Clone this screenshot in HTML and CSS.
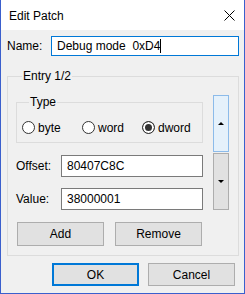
FILE: index.html
```html
<!DOCTYPE html>
<html lang="en">

<head>
    <meta charset="UTF-8">
    <meta name="viewport" content="width=device-width, initial-scale=1.0">
    <title>Edit Patch</title>

    <link rel="stylesheet" href="styles.css">
</head>

<body>
    <div class="dialog">
        <div class="titlebar">
            <span class="title">Edit Patch</span>
            <svg class="close" width="11" height="11" viewBox="0 0 11 11">
                <path d="M0.5 0.5 L10.5 10.5 M10.5 0.5 L0.5 10.5" stroke="#000" stroke-width="1" fill="none"/>
            </svg>
        </div>
        <div class="content">
            <div class="name-row">
                <label class="name-label">Name:</label>
                <div class="textbox focused">Debug mode  0xD4<span class="caret"></span></div>
            </div>

            <fieldset class="group entry">
                <legend>Entry 1/2</legend>
                <div class="entry-main">
                    <div class="entry-fields">
                        <fieldset class="group type">
                            <legend>Type</legend>
                            <div class="radios">
                                <label class="radio"><input type="radio" name="type"> byte</label>
                                <label class="radio"><input type="radio" name="type"> word</label>
                                <label class="radio"><input type="radio" name="type" checked> dword</label>
                            </div>
                        </fieldset>
                        <div class="field-row">
                            <label class="field-label">Offset:</label>
                            <div class="textbox">80407C8C</div>
                        </div>
                        <div class="field-row value">
                            <label class="field-label">Value:</label>
                            <div class="textbox">38000001</div>
                        </div>
                    </div>
                    <!-- spin buttons -->
                    <div class="spin">
                        <div class="spin-btn up">
                            <svg width="6" height="3" viewBox="0 0 6 3"><path d="M3 0 L6 3 L0 3 Z" fill="#000"/></svg>
                        </div>
                        <div class="spin-btn down">
                            <svg width="6" height="3" viewBox="0 0 6 3"><path d="M0 0 L6 0 L3 3 Z" fill="#000"/></svg>
                        </div>
                    </div>
                </div>
                <div class="entry-buttons">
                    <button class="btn">Add</button>
                    <button class="btn">Remove</button>
                </div>
            </fieldset>

            <div class="dialog-buttons">
                <button class="btn default">OK</button>
                <button class="btn">Cancel</button>
            </div>
        </div>
    </div>
</body>

</html>
```

FILE: styles.css
```css
* {
    box-sizing: border-box;
}
body {
    margin: 0;
    font-family: "Liberation Sans", Arial, sans-serif;
    font-size: 12px;
    color: #000;
}
.dialog {
    width: 245px; height: 294px;
    border: 1px solid #3a5fcd;
    border-top: 0;
    display: flex;
    flex-direction: column;
    background-color: #f0f0f0;
}
.titlebar {
    height: 30px;
    background-color: #fff;
    display: flex;
    align-items: center;
    justify-content: space-between;
    padding: 1px 9px 0 8px;
}
.close {
    display: block;
}
.content {
    flex: 1;
    padding: 6px 5px 0 6px;
}

/* name */
.name-row {
    display: flex;
    align-items: center;
}
.name-label {
    width: 44px;
}
.textbox {
    flex: 1;
    height: 22px;
    border: 1px solid #7a7a7a;
    background-color: #fff;
    padding: 0 5px;
    line-height: 20px;
    white-space: pre;
}
.name-row .textbox {
    height: 20px;
    line-height: 18px;
}
.textbox.focused {
    border-color: #0078d7;
}
.caret {
    display: inline-block;
    width: 1px; height: 14px;
    background-color: #000;
    vertical-align: -3px;
}

/* group boxes */
fieldset.group {
    margin: 0;
    padding: 0;
    min-width: 0;
    border: 1px solid #dcdcdc;
}
.group legend {
    padding: 0 1px;
    line-height: 14px;
}
fieldset.entry {
    margin-top: 13px;
    padding: 12px 9px 9px 8px;
}
.entry legend {
    margin-left: 6px;
}
fieldset.type {
    padding: 12px 0 8px 5px;
}
.type legend {
    margin-left: 7px;
}
.entry-main {
    display: flex;
    justify-content: space-between;
}
.entry-fields {
    width: 187px;
}
.radios {
    display: flex;
    height: 13px;
}
.radio {
    display: flex;
    align-items: center;
    gap: 3px;
    width: 60px;
}
.radio input {
    appearance: none;
    margin: 0;
    width: 13px; height: 13px;
    border: 1px solid #333;
    border-radius: 50%;
    background-color: #fff;
}
.radio input:checked {
    background-color: #333;
    box-shadow: inset 0 0 0 2px #fff;
}
.field-row {
    display: flex;
    align-items: center;
    margin-top: 12px;
}
.field-row.value {
    margin-top: 11px;
}
.field-label {
    width: 45px;
}

/* spin */
.spin {
    width: 16px;
    display: flex;
    flex-direction: column;
    gap: 1px;
}
.spin-btn {
    flex: 1;
    display: flex;
    align-items: center;
    justify-content: center;
    border: 1px solid #adadad;
    background-color: #e1e1e1;
}
.spin-btn.up {
    border-color: #8cbbea;
    background-color: #e5f1fb;
}
.spin-btn svg {
    display: block;
}

/* buttons */
.btn {
    width: 87px; height: 24px;
    margin: 0;
    padding: 0;
    border: 1px solid #adadad;
    background-color: #e1e1e1;
    font-family: inherit;
    font-size: 12px;
    color: #000;
}
.entry-buttons {
    display: flex;
    gap: 11px;
    margin-top: 12px;
    padding: 0 1px;
}
.dialog-buttons {
    display: flex;
    justify-content: flex-end;
    gap: 9px;
    margin-top: 7px;
    margin-right: 4px;
}
.dialog-buttons .btn {
    height: 23px;
}
.btn.default {
    border: 2px solid #0078d7;
}
```
